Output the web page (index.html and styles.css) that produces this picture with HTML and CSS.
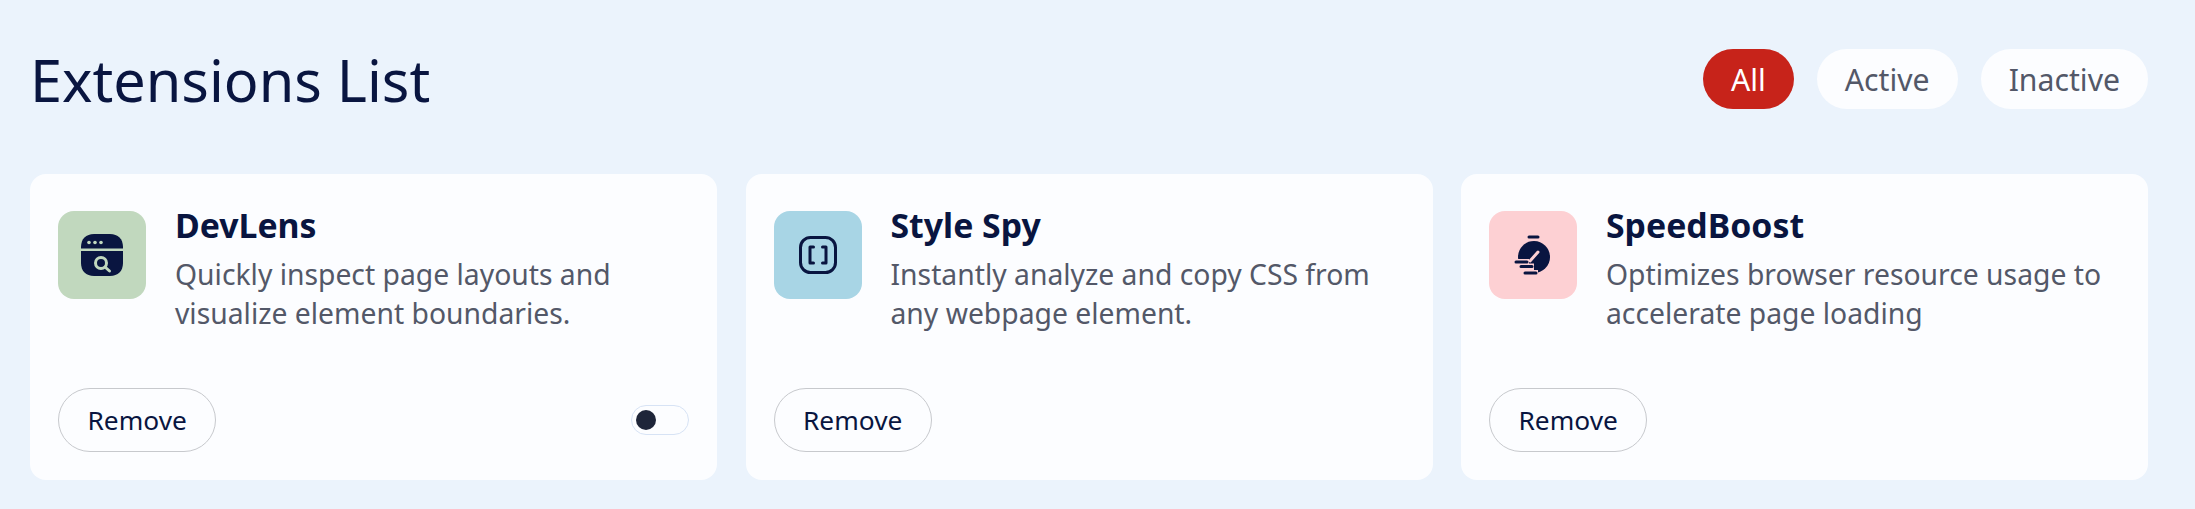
FILE: index.html
```html
<!DOCTYPE html>
<html lang="en">
<head>
<meta charset="utf-8">
<title>Extensions List</title>
<link rel="stylesheet" href="styles.css">
</head>
<body>
<main class="page">
  <header class="top">
    <h1 class="title">Extensions List</h1>
    <nav class="filters">
      <button class="pill pill-on">All</button>
      <button class="pill">Active</button>
      <button class="pill">Inactive</button>
    </nav>
  </header>
  <section class="grid">
    <article class="card">
      <div class="info">
        <div class="icon icon-green">
          <svg width="42" height="42" viewBox="0 0 42 42"><path class="fill" d="M0 14.500V13C0 5 5 0 13 0H29C37 0 42 5 42 13V14.500Z"/><path class="fill" d="M0 17H42V29C42 37 37 42 29 42H13C5 42 0 37 0 29Z"/><circle class="dot" cx="8" cy="8.500" r="1.800"/><circle class="dot" cx="14" cy="8.500" r="1.800"/><circle class="dot" cx="20" cy="8.500" r="1.800"/><circle class="lens" cx="20" cy="29" r="5.500"/><path class="lens" d="M24 33L28.500 37"/></svg>
        </div>
        <div>
          <h2 class="name">DevLens</h2>
          <p class="desc">Quickly inspect page layouts and visualize element boundaries.</p>
        </div>
      </div>
      <div class="actions">
        <button class="remove">Remove</button>
        <span class="toggle"><span class="knob"></span></span>
      </div>
    </article>
    <article class="card">
      <div class="info">
        <div class="icon icon-blue">
          <svg width="38" height="38" viewBox="0 0 38 38"><rect class="line" x="1.500" y="1.500" width="35" height="35" rx="10"/><path class="line" d="M14.500 11H11V27H14.500M23.500 11H27V27H23.500"/></svg>
        </div>
        <div>
          <h2 class="name">Style Spy</h2>
          <p class="desc">Instantly analyze and copy CSS from any webpage element.</p>
        </div>
      </div>
      <div class="actions">
        <button class="remove">Remove</button>
      </div>
    </article>
    <article class="card">
      <div class="info">
        <div class="icon icon-pink">
          <svg width="46" height="46" viewBox="0 0 46 46"><circle class="fill" cx="24" cy="25" r="16"/><path class="cut" d="M0 27H19V31.500H24V38H28V46H0Z"/><path class="slash" d="M20 29L28 20"/><path class="bar" d="M19 5H28M6 30H17M11 34.500H22M15 41H26"/></svg>
        </div>
        <div>
          <h2 class="name">SpeedBoost</h2>
          <p class="desc">Optimizes browser resource usage to accelerate page loading</p>
        </div>
      </div>
      <div class="actions">
        <button class="remove">Remove</button>
      </div>
    </article>
  </section>
</main>
</body>
</html>
```
FILE: styles.css
```css
* { box-sizing: border-box; }
html, body { margin: 0; padding: 0; }
body {
  background: #ebf3fc;
  font-family: "Noto Sans", sans-serif;
  color: #091540;
}
.page { padding: 49px 47px 0 30px; }
.top {
  display: flex;
  justify-content: space-between;
  align-items: center;
  height: 60px;
  margin-bottom: 65px;
}
.title {
  margin: 1px 0 0;
  font-size: 57.600px;
  font-weight: 400;
  line-height: 60px;
}
.filters { display: flex; gap: 23px; }
.pill {
  height: 60px;
  padding: 2px 28px 0;
  border: 0;
  border-radius: 30px;
  background: #fcfdff;
  color: #535868;
  font: 400 30.200px/1 "Noto Sans", sans-serif;
}
.pill-on { background: #c7231a; color: #fff; }
.grid {
  display: grid;
  grid-template-columns: repeat(3, 1fr);
  gap: 28.500px;
}
.card {
  display: flex;
  flex-direction: column;
  justify-content: space-between;
  height: 306px;
  padding: 20px 28px 28px;
  border-radius: 16px;
  background: #fcfdff;
}
.info { display: flex; gap: 29px; }
.icon {
  flex: none;
  display: flex;
  align-items: center;
  justify-content: center;
  width: 88px;
  height: 88px;
  margin-top: 17px;
  border-radius: 16px;
}
.icon-green { background: #c1d8be; }
.icon-blue { background: #a8d5e5; }
.icon-pink { background: #fdd0d3; }
.fill { fill: #091540; }
.dot { fill: #c1d8be; }
.lens { fill: none; stroke: #c1d8be; stroke-width: 3; stroke-linecap: round; }
.line { fill: none; stroke: #091540; stroke-width: 3; stroke-linejoin: round; stroke-linecap: round; }
.bar { fill: none; stroke: #091540; stroke-width: 3; stroke-linecap: round; }
.cut { fill: #fdd0d3; }
.slash { fill: none; stroke: #fdd0d3; stroke-width: 3; stroke-linecap: round; }
.name {
  margin: 11px 0 0;
  font-size: 33.800px;
  font-weight: 700;
  line-height: 40px;
}
.desc {
  margin: 10px 0 0;
  font-size: 28.300px;
  line-height: 39px;
  color: #535868;
}
.actions {
  display: flex;
  align-items: center;
  justify-content: space-between;
}
.remove {
  height: 64px;
  padding: 0 28.500px;
  border: 1.500px solid #c7c9cd;
  border-radius: 32px;
  background: transparent;
  color: #091540;
  font: 400 26.300px/1 "Noto Sans", sans-serif;
}
.toggle {
  display: flex;
  align-items: center;
  width: 58px;
  height: 30px;
  padding: 0 4px;
  border: 1px solid #d7e3f5;
  border-radius: 15px;
}
.knob {
  width: 20px;
  height: 20px;
  border-radius: 50%;
  background: #1e2539;
}
```
